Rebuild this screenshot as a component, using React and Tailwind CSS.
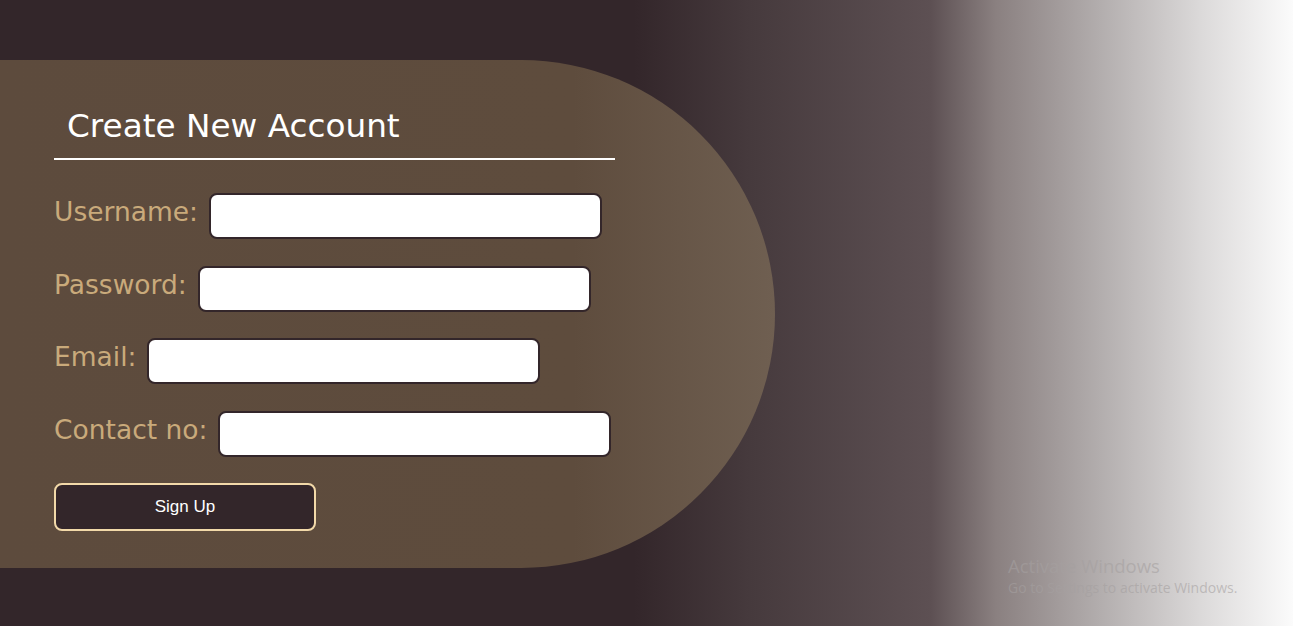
export default function App() {
  const rows = [
    { label: "Username:", type: "text" },
    { label: "Password:", type: "password" },
    { label: "Email:", type: "email" },
    { label: "Contact no:", type: "tel" },
  ];
  return (
    <div
      className="relative w-full min-h-[626px] h-[626px] overflow-hidden pt-[60px] bg-[linear-gradient(to_right,#33262a_0%,#33262a_49%,#463a3d_58%,#5d5053_72%,#8a8080_77%,#b2adad_85%,#dcdada_93%,#fbfbfb_100%)]"
      style={{ fontFamily: '"DejaVu Sans", Verdana, sans-serif' }}
    >
      <div className="w-[775px] h-[508px] rounded-r-[254px] bg-[linear-gradient(to_right,#5d4b3d_0%,#5e4c3d_74%,#6f5f51_100%)] pl-[54px] pt-[46px]">
        <h1 className="w-[561px] border-b-2 border-white pl-[13px] pb-[12px] text-[32.7px] leading-[40px] font-normal text-white">
          Create New Account
        </h1>
        <form className="mt-[33px] flex flex-col gap-[26.5px]">
          {rows.map((r) => (
            <div key={r.label} className="flex items-center gap-[11px]">
              <label className="text-[26.5px] leading-[30px] pb-[8px] text-[#c9aa7b]">{r.label}</label>
              <input
                type={r.type}
                className="w-[393px] h-[46px] bg-white border-2 border-[#33262a] rounded-[8px] outline-none px-2"
              />
            </div>
          ))}
        </form>
        <button
          type="button"
          className="mt-[26px] w-[262px] h-[48px] bg-[#33262a] border-2 border-[#f2d9a9] rounded-[8px] text-white text-[17px]"
          style={{ fontFamily: '"Liberation Sans", Arial, sans-serif' }}
        >
          Sign Up
        </button>
      </div>
      <div
        className="absolute left-[1008px] top-[554px] text-[rgba(165,160,160,0.6)]"
        style={{ fontFamily: '"Open Sans", "Noto Sans", sans-serif' }}
      >
        <div className="text-[18.5px] leading-[24px]">Activate Windows</div>
        <div className="text-[14px] leading-[20px]">Go to Settings to activate Windows.</div>
      </div>
    </div>
  );
}
